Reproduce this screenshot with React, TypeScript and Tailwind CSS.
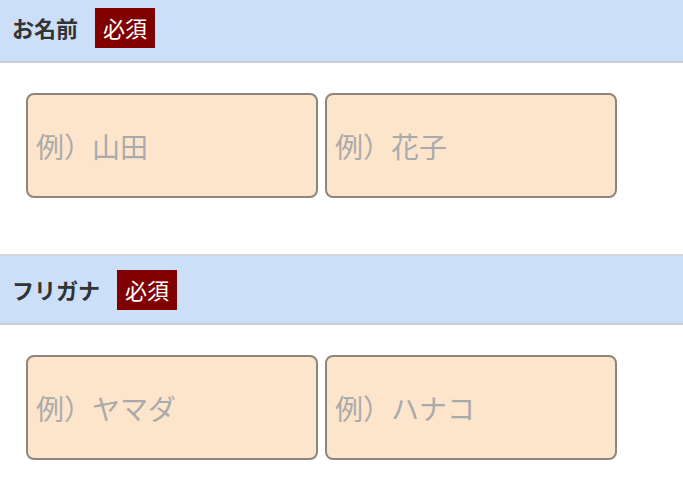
import type React from "react"

const font = { fontFamily: '"Noto Sans CJK JP", "Noto Sans", sans-serif' }

interface SectionProps {
  label: string
  placeholders: [string, string]
  first?: boolean
}

const Section: React.FC<SectionProps> = ({ label, placeholders, first }) => {
  return (
    <div>
      <div
        className={`flex items-center h-[71px] bg-[#cbdff8] border-y-2 border-b-[#c9ccd0] border-t-[#d3d6da] pl-3 ${
          first ? "-mt-[8px]" : ""
        }`}
      >
        <span className="text-[22px] font-bold text-[#333333]">{label}</span>
        <span className="ml-[17px] bg-[#800000] text-white text-[22px] px-2 h-[40px] flex items-center">必須</span>
      </div>
      <div className="flex gap-[7px] pl-[26px] pt-[30px] pb-[56px]">
        {placeholders.map((p) => (
          <input
            key={p}
            placeholder={p}
            className="w-[292px] h-[105px] rounded-lg border-2 border-[#8f857c] bg-[#fde5cc] px-2 text-[28px] text-[#333] placeholder:text-[#aaaaaa] outline-none"
            style={font}
          />
        ))}
      </div>
    </div>
  )
}

export default function App() {
  return (
    <div className="w-[683px] h-[498px] bg-white overflow-hidden" style={font}>
      <Section label="お名前" placeholders={["例）山田", "例）花子"]} first />
      <Section label="フリガナ" placeholders={["例）ヤマダ", "例）ハナコ"]} />
    </div>
  )
}
